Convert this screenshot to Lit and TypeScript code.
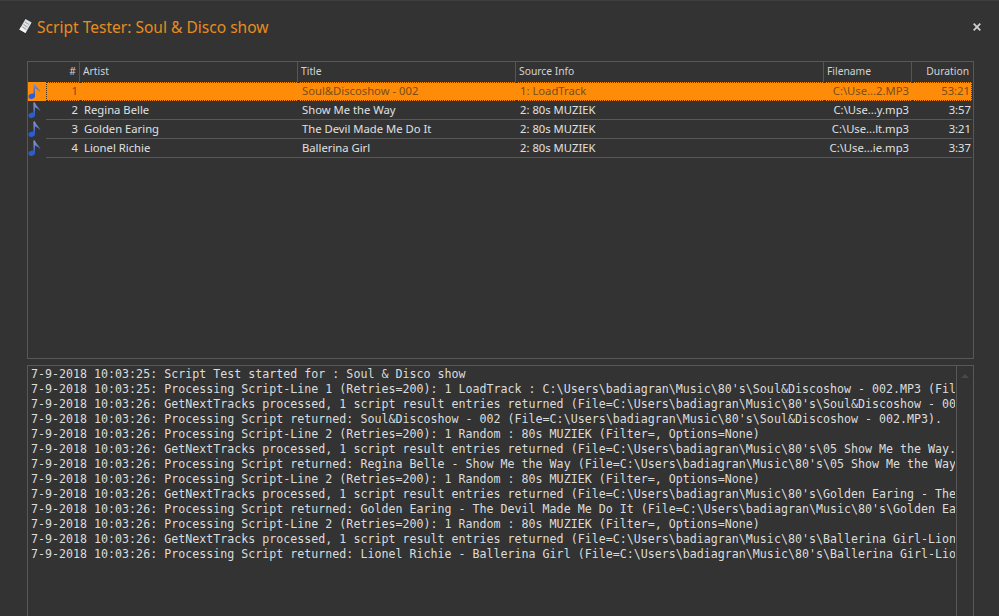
import { LitElement, html, css, svg } from 'lit';
import { customElement } from 'lit/decorators.js';

interface Track {
  num: number;
  artist: string;
  title: string;
  source: string;
  file: string;
  duration: string;
}

const TRACKS: Track[] = [
  { num: 1, artist: '', title: 'Soul&Discoshow - 002', source: '1: LoadTrack', file: 'C:\\Use...2.MP3', duration: '53:21' },
  { num: 2, artist: 'Regina Belle', title: 'Show Me the Way', source: '2: 80s MUZIEK', file: 'C:\\Use...y.mp3', duration: '3:57' },
  { num: 3, artist: 'Golden Earing', title: 'The Devil Made Me Do It', source: '2: 80s MUZIEK', file: 'C:\\Use...lt.mp3', duration: '3:21' },
  { num: 4, artist: 'Lionel Richie', title: 'Ballerina Girl', source: '2: 80s MUZIEK', file: 'C:\\Use...ie.mp3', duration: '3:37' },
];

const LOG: string[] = [
  "7-9-2018 10:03:25: Script Test started for : Soul & Disco show",
  "7-9-2018 10:03:25: Processing Script-Line 1 (Retries=200): 1 LoadTrack : C:\\Users\\badiagran\\Music\\80's\\Soul&Discoshow - 002.MP3 (Filter=, Options=None)",
  "7-9-2018 10:03:26: GetNextTracks processed, 1 script result entries returned (File=C:\\Users\\badiagran\\Music\\80's\\Soul&Discoshow - 002.MP3).",
  "7-9-2018 10:03:26: Processing Script returned: Soul&Discoshow - 002 (File=C:\\Users\\badiagran\\Music\\80's\\Soul&Discoshow - 002.MP3).",
  "7-9-2018 10:03:26: Processing Script-Line 2 (Retries=200): 1 Random : 80s MUZIEK (Filter=, Options=None)",
  "7-9-2018 10:03:26: GetNextTracks processed, 1 script result entries returned (File=C:\\Users\\badiagran\\Music\\80's\\05 Show Me the Way.mp3).",
  "7-9-2018 10:03:26: Processing Script returned: Regina Belle - Show Me the Way (File=C:\\Users\\badiagran\\Music\\80's\\05 Show Me the Way.mp3).",
  "7-9-2018 10:03:26: Processing Script-Line 2 (Retries=200): 1 Random : 80s MUZIEK (Filter=, Options=None)",
  "7-9-2018 10:03:26: GetNextTracks processed, 1 script result entries returned (File=C:\\Users\\badiagran\\Music\\80's\\Golden Earing - The Devil.mp3).",
  "7-9-2018 10:03:26: Processing Script returned: Golden Earing - The Devil Made Me Do It (File=C:\\Users\\badiagran\\Music\\80's\\Golden Earing.mp3).",
  "7-9-2018 10:03:26: Processing Script-Line 2 (Retries=200): 1 Random : 80s MUZIEK (Filter=, Options=None)",
  "7-9-2018 10:03:26: GetNextTracks processed, 1 script result entries returned (File=C:\\Users\\badiagran\\Music\\80's\\Ballerina Girl-Lionel Richie.mp3).",
  "7-9-2018 10:03:26: Processing Script returned: Lionel Richie - Ballerina Girl (File=C:\\Users\\badiagran\\Music\\80's\\Ballerina Girl-Lionel Richie.mp3).",
];

const noteIcon = svg`<svg class="note" width="14" height="19" viewBox="0 0 14 19">
  <defs>
    <linearGradient id="n" x1="0" y1="0" x2="0" y2="1">
      <stop offset="0" stop-color="#8d98c4"/>
      <stop offset="1" stop-color="#2a55c0"/>
    </linearGradient>
  </defs>
  <path d="M5.4 1.5 L7 1.5 C7.4 4 10.6 6 12.6 10.4 C11 8.6 9 7 7 6.4 L7 14.5 L5.4 14.5 Z" fill="url(#n)"/>
  <ellipse cx="3.8" cy="14.2" rx="3.4" ry="2.6" fill="#2b5cd2" transform="rotate(-18 3.8 14.2)"/>
</svg>`;

const scrollIcon = svg`<svg width="15" height="17" viewBox="0 0 15 17">
  <path d="M7.5 1 L13.6 4.6 L7.6 15 L1.4 11.4 Z" fill="#dfe3e6"/>
  <path d="M7 4 L11 6.5 M5.6 6.6 L9.6 9 M4.4 9 L8.2 11.4" stroke="#8d959b" stroke-width="0.9"/>
  <path d="M1.4 11.4 L2.8 9.2 L8.2 12.4 L7.6 15 Z" fill="#f4f5f6"/>
</svg>`;

@customElement('app-root')
export class AppRoot extends LitElement {
  static styles = css`
    :host {
      display: block;
      box-sizing: border-box;
      width: 999px;
      height: 616px;
      overflow: hidden;
      background: #333333;
      border-top: 1px solid #3f3f3f;
      font-family: 'Noto Sans', 'Open Sans', sans-serif;
      color: #e0e0e0;
    }

    .titlebar {
      display: flex;
      align-items: center;
      height: 60px;
      padding: 0 18px 9px 18px;
      box-sizing: border-box;
    }

    .title {
      margin-left: 4px;
      font-size: 15.55px;
      color: #e98c1f;
      flex: 1;
    }

    .close {
      display: block;
    }

    .panels {
      display: flex;
      flex-direction: column;
      gap: 6px;
      padding: 0 25px 0 27px;
    }

    .table {
      height: 298px;
      box-sizing: border-box;
      border: 1px solid #585858;
      font-size: 11.25px;
    }

    .row {
      display: grid;
      grid-template-columns: 18px 34px 218px 218px 308px 88px 60px;
      height: 19px;
      line-height: 18px;
      white-space: nowrap;
    }

    .head {
      height: 20px;
      line-height: 18px;
      font-size: 10.3px;
      grid-template-columns: 52px 218px 218px 308px 88px 60px;
    }

    .head div {
      border-right: 1px solid #555555;
      padding-left: 3px;
      color: #d2d2d2;
      box-sizing: border-box;
    }

    .head div:last-child {
      border-right: none;
      text-align: right;
      padding-right: 3px;
    }

    .head .hash {
      text-align: right;
      padding-right: 3px;
    }

    .icon {
      height: 19px;
    }

    .note {
      display: block;
    }

    .cell {
      border-bottom: 1px solid #585858;
      padding-left: 4px;
      overflow: hidden;
      box-sizing: border-box;
    }

    .cell.right {
      text-align: right;
      padding-right: 1px;
    }

    .cell.num {
      padding-right: 2px;
    }

    .cell.file {
      padding-right: 3px;
    }

    .row.sel .icon {
      background: #ff8c09;
    }

    .row.sel .cell {
      background: #ff8c09;
      color: #7a4d14;
      border-top: 1px dotted #4a3010;
      border-bottom: 1px dotted #4a3010;
      line-height: 16px;
    }

    .row.sel .cell.num {
      border-left: 1px dotted #4a3010;
    }

    .row.sel .cell:last-child {
      border-right: 1px dotted #4a3010;
    }

    .log {
      display: flex;
      height: 260px;
      box-sizing: border-box;
      border: 1px solid #585858;
    }

    .lines {
      flex: 1;
      min-width: 0;
      margin-right: 1px;
      overflow: hidden;
      padding: 1px 0 0 3px;
      font-family: 'DejaVu Sans Mono', monospace;
      font-size: 11.65px;
      line-height: 15px;
      color: #dcdcdc;
      white-space: pre;
    }

    .scrollbar {
      width: 17px;
      border-left: 1px solid #585858;
      display: flex;
      justify-content: center;
      padding-top: 8px;
      box-sizing: border-box;
    }

    .arrow {
      width: 0;
      height: 0;
      border-left: 4px solid transparent;
      border-right: 4px solid transparent;
      border-bottom: 4px solid #484848;
    }
  `;

  render() {
    return html`
      <div class="titlebar">
        ${scrollIcon}
        <span class="title">Script Tester: Soul &amp; Disco show</span>
        <svg class="close" width="8" height="8" viewBox="0 0 8 8">
          <path d="M0.7 0.7 L7.3 7.3 M7.3 0.7 L0.7 7.3" stroke="#cfcfcf" stroke-width="1.8"/>
        </svg>
      </div>
      <div class="panels">
        <div class="table">
          <div class="row head">
            <div class="hash">#</div>
            <div>Artist</div>
            <div>Title</div>
            <div>Source Info</div>
            <div>Filename</div>
            <div>Duration</div>
          </div>
          ${TRACKS.map(
            (t, i) => html`
              <div class="row ${i === 0 ? 'sel' : ''}">
                <div class="icon">${noteIcon}</div>
                <div class="cell right num">${t.num}</div>
                <div class="cell">${t.artist}</div>
                <div class="cell">${t.title}</div>
                <div class="cell">${t.source}</div>
                <div class="cell right file">${t.file}</div>
                <div class="cell right">${t.duration}</div>
              </div>
            `
          )}
        </div>
        <div class="log">
          <div class="lines">${LOG.join('\n')}</div>
          <div class="scrollbar"><div class="arrow"></div></div>
        </div>
      </div>
    `;
  }
}
